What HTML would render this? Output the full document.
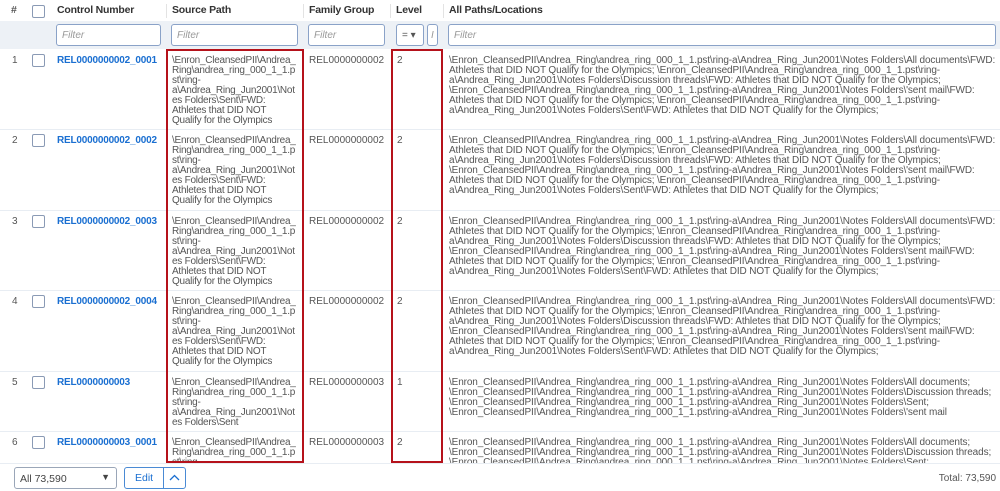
<!DOCTYPE html>
<html><head><meta charset="utf-8"><style>
*{margin:0;padding:0;box-sizing:border-box}
body{width:1000px;height:491px;overflow:hidden;background:#fff;font-family:"Liberation Sans",sans-serif;color:#444;position:relative}
.a{position:absolute;white-space:pre}
.h{font-size:10.5px;font-weight:bold;color:#333;top:4px;letter-spacing:-0.2px}
.sep{position:absolute;top:4px;width:1px;height:14px;background:#e3e3e3}
.f{position:absolute;top:24px;height:22px;border:1px solid #8aa2c8;border-radius:3px;background:#fff;font-size:10px;font-style:italic;color:#999;padding:5px 0 0 5px}
.t{font-size:10px;line-height:10px;letter-spacing:-0.12px;color:#555}
.s{letter-spacing:-0.25px}
.cb{position:absolute;width:13px;height:13px;border:1px solid #8a9ab5;border-radius:2px;background:#fff}
.n{font-size:10px;color:#555}
.cn{font-size:10px;font-weight:bold;color:#1a6fd1;letter-spacing:-0.2px}
.rl{position:absolute;left:0;width:1000px;height:1px;background:#e8edf3}
.red{position:absolute;border:2px solid #b5121b;top:49px;height:414px}
</style></head><body>
<div class="a h" style="left:11px;color:#555">#</div>
<div class="cb" style="left:32px;top:5px"></div>
<div class="a h" style="left:57px">Control Number</div>
<div class="sep" style="left:166px"></div>
<div class="a h" style="left:172px">Source Path</div>
<div class="sep" style="left:303px"></div>
<div class="a h" style="left:309px">Family Group</div>
<div class="sep" style="left:390px"></div>
<div class="a h" style="left:396px">Level</div>
<div class="sep" style="left:443px"></div>
<div class="a h" style="left:449px">All Paths/Locations</div>
<div style="position:absolute;left:0;top:21px;width:1000px;height:28px;background:#edf1f6"></div>
<div class="f" style="left:56px;width:105px">Filter</div>
<div class="f" style="left:171px;width:127px">Filter</div>
<div class="f" style="left:308px;width:77px">Filter</div>
<div class="f" style="left:396px;width:28px;font-style:normal;color:#555">= ▾</div>
<div class="f" style="left:427px;width:11px;padding-left:3px">I</div>
<div class="f" style="left:448px;width:548px">Filter</div>
<div class="rl" style="top:129px"></div><div class="rl" style="top:210px"></div><div class="rl" style="top:290px"></div><div class="rl" style="top:371px"></div><div class="rl" style="top:431px"></div>

<!-- row1 -->
<div class="a n" style="left:12px;top:55px">1</div><div class="cb" style="left:32px;top:54px"></div>
<div class="a cn" style="left:57px;top:55px">REL0000000002_0001</div>
<div class="a t s" style="left:172px;top:56px">\Enron_CleansedPII\Andrea_
Ring\andrea_ring_000_1_1.p
st\ring-
a\Andrea_Ring_Jun2001\Not
es Folders\Sent\FWD:
Athletes that DID NOT
Qualify for the Olympics</div>
<div class="a n" style="left:309px;top:55px">REL0000000002</div>
<div class="a n" style="left:397px;top:55px">2</div>
<div class="a t" style="left:449px;top:56px">\Enron_CleansedPII\Andrea_Ring\andrea_ring_000_1_1.pst\ring-a\Andrea_Ring_Jun2001\Notes Folders\All documents\FWD:
Athletes that DID NOT Qualify for the Olympics; \Enron_CleansedPII\Andrea_Ring\andrea_ring_000_1_1.pst\ring-
a\Andrea_Ring_Jun2001\Notes Folders\Discussion threads\FWD: Athletes that DID NOT Qualify for the Olympics;
\Enron_CleansedPII\Andrea_Ring\andrea_ring_000_1_1.pst\ring-a\Andrea_Ring_Jun2001\Notes Folders\'sent mail\FWD:
Athletes that DID NOT Qualify for the Olympics; \Enron_CleansedPII\Andrea_Ring\andrea_ring_000_1_1.pst\ring-
a\Andrea_Ring_Jun2001\Notes Folders\Sent\FWD: Athletes that DID NOT Qualify for the Olympics;</div>

<!-- row2 -->
<div class="a n" style="left:12px;top:135px">2</div><div class="cb" style="left:32px;top:134px"></div>
<div class="a cn" style="left:57px;top:135px">REL0000000002_0002</div>
<div class="a t s" style="left:172px;top:136px">\Enron_CleansedPII\Andrea_
Ring\andrea_ring_000_1_1.p
st\ring-
a\Andrea_Ring_Jun2001\Not
es Folders\Sent\FWD:
Athletes that DID NOT
Qualify for the Olympics</div>
<div class="a n" style="left:309px;top:135px">REL0000000002</div>
<div class="a n" style="left:397px;top:135px">2</div>
<div class="a t" style="left:449px;top:136px">\Enron_CleansedPII\Andrea_Ring\andrea_ring_000_1_1.pst\ring-a\Andrea_Ring_Jun2001\Notes Folders\All documents\FWD:
Athletes that DID NOT Qualify for the Olympics; \Enron_CleansedPII\Andrea_Ring\andrea_ring_000_1_1.pst\ring-
a\Andrea_Ring_Jun2001\Notes Folders\Discussion threads\FWD: Athletes that DID NOT Qualify for the Olympics;
\Enron_CleansedPII\Andrea_Ring\andrea_ring_000_1_1.pst\ring-a\Andrea_Ring_Jun2001\Notes Folders\'sent mail\FWD:
Athletes that DID NOT Qualify for the Olympics; \Enron_CleansedPII\Andrea_Ring\andrea_ring_000_1_1.pst\ring-
a\Andrea_Ring_Jun2001\Notes Folders\Sent\FWD: Athletes that DID NOT Qualify for the Olympics;</div>

<!-- row3 -->
<div class="a n" style="left:12px;top:216px">3</div><div class="cb" style="left:32px;top:215px"></div>
<div class="a cn" style="left:57px;top:216px">REL0000000002_0003</div>
<div class="a t s" style="left:172px;top:217px">\Enron_CleansedPII\Andrea_
Ring\andrea_ring_000_1_1.p
st\ring-
a\Andrea_Ring_Jun2001\Not
es Folders\Sent\FWD:
Athletes that DID NOT
Qualify for the Olympics</div>
<div class="a n" style="left:309px;top:216px">REL0000000002</div>
<div class="a n" style="left:397px;top:216px">2</div>
<div class="a t" style="left:449px;top:217px">\Enron_CleansedPII\Andrea_Ring\andrea_ring_000_1_1.pst\ring-a\Andrea_Ring_Jun2001\Notes Folders\All documents\FWD:
Athletes that DID NOT Qualify for the Olympics; \Enron_CleansedPII\Andrea_Ring\andrea_ring_000_1_1.pst\ring-
a\Andrea_Ring_Jun2001\Notes Folders\Discussion threads\FWD: Athletes that DID NOT Qualify for the Olympics;
\Enron_CleansedPII\Andrea_Ring\andrea_ring_000_1_1.pst\ring-a\Andrea_Ring_Jun2001\Notes Folders\'sent mail\FWD:
Athletes that DID NOT Qualify for the Olympics; \Enron_CleansedPII\Andrea_Ring\andrea_ring_000_1_1.pst\ring-
a\Andrea_Ring_Jun2001\Notes Folders\Sent\FWD: Athletes that DID NOT Qualify for the Olympics;</div>

<!-- row4 -->
<div class="a n" style="left:12px;top:296px">4</div><div class="cb" style="left:32px;top:295px"></div>
<div class="a cn" style="left:57px;top:296px">REL0000000002_0004</div>
<div class="a t s" style="left:172px;top:297px">\Enron_CleansedPII\Andrea_
Ring\andrea_ring_000_1_1.p
st\ring-
a\Andrea_Ring_Jun2001\Not
es Folders\Sent\FWD:
Athletes that DID NOT
Qualify for the Olympics</div>
<div class="a n" style="left:309px;top:296px">REL0000000002</div>
<div class="a n" style="left:397px;top:296px">2</div>
<div class="a t" style="left:449px;top:297px">\Enron_CleansedPII\Andrea_Ring\andrea_ring_000_1_1.pst\ring-a\Andrea_Ring_Jun2001\Notes Folders\All documents\FWD:
Athletes that DID NOT Qualify for the Olympics; \Enron_CleansedPII\Andrea_Ring\andrea_ring_000_1_1.pst\ring-
a\Andrea_Ring_Jun2001\Notes Folders\Discussion threads\FWD: Athletes that DID NOT Qualify for the Olympics;
\Enron_CleansedPII\Andrea_Ring\andrea_ring_000_1_1.pst\ring-a\Andrea_Ring_Jun2001\Notes Folders\'sent mail\FWD:
Athletes that DID NOT Qualify for the Olympics; \Enron_CleansedPII\Andrea_Ring\andrea_ring_000_1_1.pst\ring-
a\Andrea_Ring_Jun2001\Notes Folders\Sent\FWD: Athletes that DID NOT Qualify for the Olympics;</div>

<!-- row5 -->
<div class="a n" style="left:12px;top:377px">5</div><div class="cb" style="left:32px;top:376px"></div>
<div class="a cn" style="left:57px;top:377px">REL0000000003</div>
<div class="a t s" style="left:172px;top:378px">\Enron_CleansedPII\Andrea_
Ring\andrea_ring_000_1_1.p
st\ring-
a\Andrea_Ring_Jun2001\Not
es Folders\Sent</div>
<div class="a n" style="left:309px;top:377px">REL0000000003</div>
<div class="a n" style="left:397px;top:377px">1</div>
<div class="a t" style="left:449px;top:378px">\Enron_CleansedPII\Andrea_Ring\andrea_ring_000_1_1.pst\ring-a\Andrea_Ring_Jun2001\Notes Folders\All documents;
\Enron_CleansedPII\Andrea_Ring\andrea_ring_000_1_1.pst\ring-a\Andrea_Ring_Jun2001\Notes Folders\Discussion threads;
\Enron_CleansedPII\Andrea_Ring\andrea_ring_000_1_1.pst\ring-a\Andrea_Ring_Jun2001\Notes Folders\Sent;
\Enron_CleansedPII\Andrea_Ring\andrea_ring_000_1_1.pst\ring-a\Andrea_Ring_Jun2001\Notes Folders\'sent mail</div>

<!-- row6 -->
<div style="position:absolute;left:0;top:432px;width:1000px;height:31px;overflow:hidden">
<div class="a n" style="left:12px;top:5px">6</div><div class="cb" style="left:32px;top:4px"></div>
<div class="a cn" style="left:57px;top:5px">REL0000000003_0001</div>
<div class="a t s" style="left:172px;top:6px">\Enron_CleansedPII\Andrea_
Ring\andrea_ring_000_1_1.p
st\ring-</div>
<div class="a n" style="left:309px;top:5px">REL0000000003</div>
<div class="a n" style="left:397px;top:5px">2</div>
<div class="a t" style="left:449px;top:6px">\Enron_CleansedPII\Andrea_Ring\andrea_ring_000_1_1.pst\ring-a\Andrea_Ring_Jun2001\Notes Folders\All documents;
\Enron_CleansedPII\Andrea_Ring\andrea_ring_000_1_1.pst\ring-a\Andrea_Ring_Jun2001\Notes Folders\Discussion threads;
\Enron_CleansedPII\Andrea_Ring\andrea_ring_000_1_1.pst\ring-a\Andrea_Ring_Jun2001\Notes Folders\Sent;</div>
</div>

<div class="red" style="left:166px;width:138px"></div>
<div class="red" style="left:391px;width:52px"></div>

<!-- footer -->
<div style="position:absolute;left:0;top:463px;width:1000px;height:28px;background:#fff;border-top:1px solid #e8edf3"></div>
<div style="position:absolute;left:14px;top:467px;width:103px;height:22px;border:1px solid #9aa6b8;border-radius:3px;font-size:10.5px;color:#444;padding:5px 0 0 5px">All 73,590<span style="position:absolute;right:6px;top:4px;font-size:9px">▼</span></div>
<div style="position:absolute;left:124px;top:467px;width:62px;height:22px;border:1px solid #4a8ad4;border-radius:3px"></div>
<div style="position:absolute;left:163px;top:467px;width:1px;height:22px;background:#4a8ad4"></div>
<div class="a" style="left:135px;top:472px;font-size:10.5px;color:#1a6fd1">Edit</div>
<svg style="position:absolute;left:169px;top:474px" width="11" height="7"><path d="M1 6 L5.5 1.5 L10 6" fill="none" stroke="#1a6fd1" stroke-width="1.3"/></svg>
<div class="a" style="right:4px;top:473px;font-size:10px;color:#555">Total: 73,590</div>
</body></html>
